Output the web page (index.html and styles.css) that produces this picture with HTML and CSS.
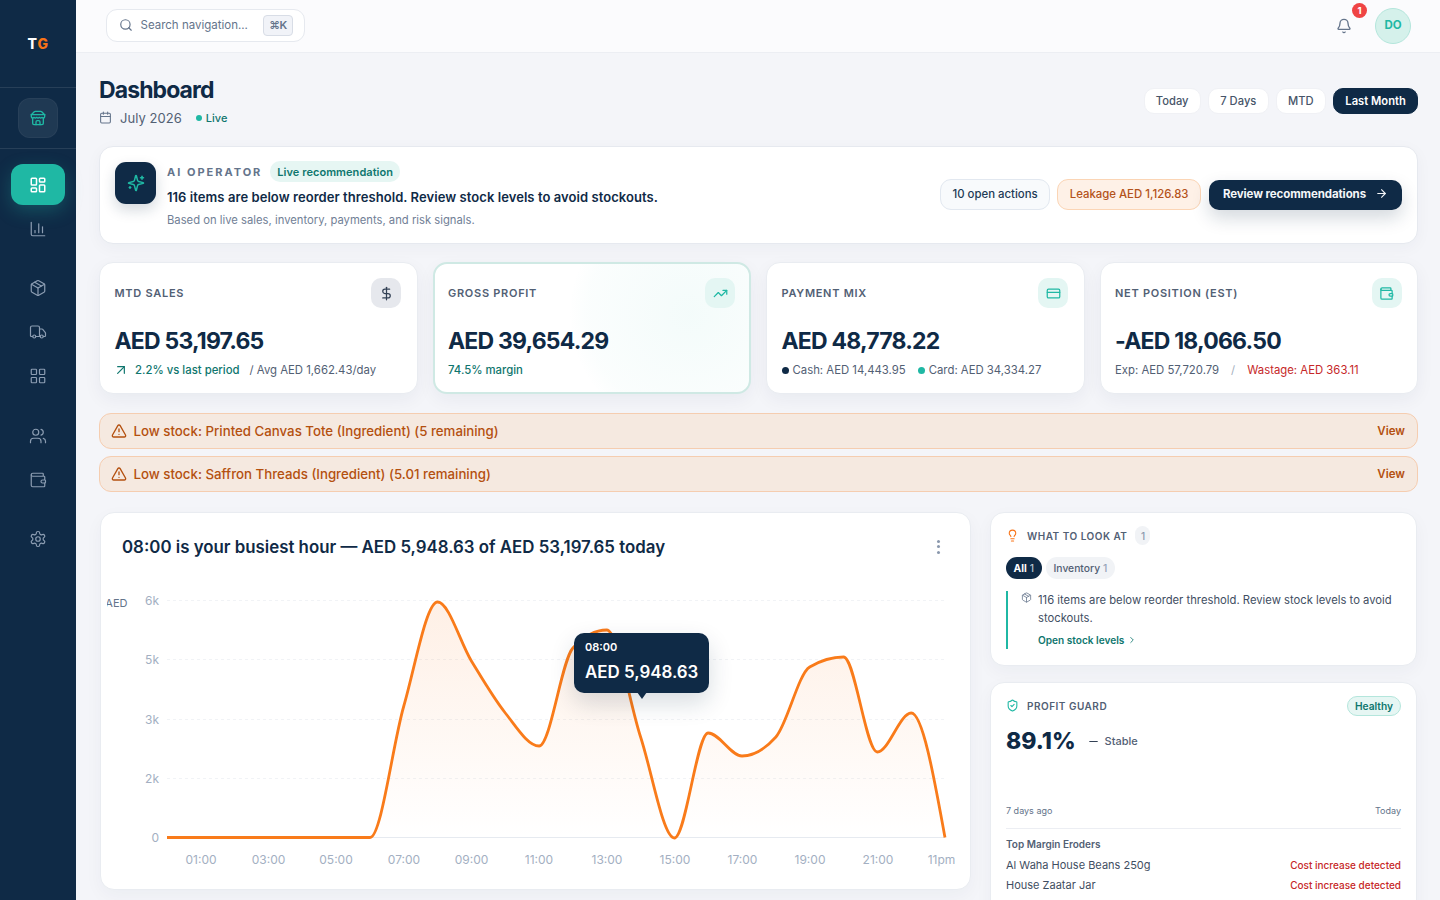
FILE: index.html
```html
<!DOCTYPE html>
<html lang="en">
<head>
<meta charset="utf-8">
<title>Dashboard</title>
<link rel="stylesheet" href="styles.css">
</head>
<body>
<svg class="sprite" aria-hidden="true">
  <symbol id="i-store" viewBox="0 0 24 24"><path d="m2 7 4.41-4.41A2 2 0 0 1 7.83 2h8.34a2 2 0 0 1 1.42.59L22 7"/><path d="M4 12v8a2 2 0 0 0 2 2h12a2 2 0 0 0 2-2v-8"/><path d="M15 22v-4a2 2 0 0 0-2-2h-2a2 2 0 0 0-2 2v4"/><path d="M2 7h20"/><path d="M22 7v3a2 2 0 0 1-2 2a2.7 2.7 0 0 1-1.59-.63.7.7 0 0 0-.82 0A2.7 2.7 0 0 1 16 12a2.7 2.7 0 0 1-1.59-.63.7.7 0 0 0-.82 0A2.7 2.7 0 0 1 12 12a2.7 2.7 0 0 1-1.59-.63.7.7 0 0 0-.82 0A2.7 2.7 0 0 1 8 12a2.7 2.7 0 0 1-1.59-.63.7.7 0 0 0-.82 0A2.7 2.7 0 0 1 4 12a2 2 0 0 1-2-2V7"/></symbol>
  <symbol id="i-dash" viewBox="0 0 24 24"><rect x="3" y="3" width="7" height="9" rx="1"/><rect x="14" y="3" width="7" height="5" rx="1"/><rect x="14" y="12" width="7" height="9" rx="1"/><rect x="3" y="16" width="7" height="5" rx="1"/></symbol>
  <symbol id="i-chart" viewBox="0 0 24 24"><path d="M3 3v16a2 2 0 0 0 2 2h16"/><path d="M18 17V9"/><path d="M13 17V5"/><path d="M8 17v-3"/></symbol>
  <symbol id="i-package" viewBox="0 0 24 24"><path d="M11 21.73a2 2 0 0 0 2 0l7-4A2 2 0 0 0 21 16V8a2 2 0 0 0-1-1.73l-7-4a2 2 0 0 0-2 0l-7 4A2 2 0 0 0 3 8v8a2 2 0 0 0 1 1.73z"/><path d="M12 22V12"/><path d="m3.3 7 8.7 5 8.7-5"/><path d="m7.5 4.27 9 5.15"/></symbol>
  <symbol id="i-truck" viewBox="0 0 24 24"><path d="M14 18V6a2 2 0 0 0-2-2H4a2 2 0 0 0-2 2v11a1 1 0 0 0 1 1h2"/><path d="M15 18H9"/><path d="M19 18h2a1 1 0 0 0 1-1v-3.65a1 1 0 0 0-.22-.624l-3.48-4.35A1 1 0 0 0 17.52 8H14"/><circle cx="17" cy="18" r="2"/><circle cx="7" cy="18" r="2"/></symbol>
  <symbol id="i-grid" viewBox="0 0 24 24"><rect x="3" y="3" width="7" height="7" rx="1"/><rect x="14" y="3" width="7" height="7" rx="1"/><rect x="14" y="14" width="7" height="7" rx="1"/><rect x="3" y="14" width="7" height="7" rx="1"/></symbol>
  <symbol id="i-users" viewBox="0 0 24 24"><path d="M16 21v-2a4 4 0 0 0-4-4H6a4 4 0 0 0-4 4v2"/><circle cx="9" cy="7" r="4"/><path d="M22 21v-2a4 4 0 0 0-3-3.87"/><path d="M16 3.13a4 4 0 0 1 0 7.75"/></symbol>
  <symbol id="i-wallet" viewBox="0 0 24 24"><path d="M19 7V4a1 1 0 0 0-1-1H5a2 2 0 0 0 0 4h15a1 1 0 0 1 1 1v4h-3a2 2 0 0 0 0 4h3a1 1 0 0 0 1-1v-2a1 1 0 0 0-1-1"/><path d="M3 5v14a2 2 0 0 0 2 2h15a1 1 0 0 0 1-1v-4"/></symbol>
  <symbol id="i-settings" viewBox="0 0 24 24"><path d="M12.22 2h-.44a2 2 0 0 0-2 2v.18a2 2 0 0 1-1 1.73l-.43.25a2 2 0 0 1-2 0l-.15-.08a2 2 0 0 0-2.73.73l-.22.38a2 2 0 0 0 .73 2.73l.15.1a2 2 0 0 1 1 1.72v.51a2 2 0 0 1-1 1.74l-.15.09a2 2 0 0 0-.73 2.73l.22.38a2 2 0 0 0 2.73.73l.15-.08a2 2 0 0 1 2 0l.43.25a2 2 0 0 1 1 1.73V20a2 2 0 0 0 2 2h.44a2 2 0 0 0 2-2v-.18a2 2 0 0 1 1-1.73l.43-.25a2 2 0 0 1 2 0l.15.08a2 2 0 0 0 2.73-.73l.22-.39a2 2 0 0 0-.73-2.73l-.15-.08a2 2 0 0 1-1-1.74v-.5a2 2 0 0 1 1-1.74l.15-.09a2 2 0 0 0 .73-2.73l-.22-.38a2 2 0 0 0-2.73-.73l-.15.08a2 2 0 0 1-2 0l-.43-.25a2 2 0 0 1-1-1.73V4a2 2 0 0 0-2-2z"/><circle cx="12" cy="12" r="3"/></symbol>
  <symbol id="i-search" viewBox="0 0 24 24"><circle cx="11" cy="11" r="8"/><path d="m21 21-4.3-4.3"/></symbol>
  <symbol id="i-bell" viewBox="0 0 24 24"><path d="M10.268 21a2 2 0 0 0 3.464 0"/><path d="M3.262 15.326A1 1 0 0 0 4 17h16a1 1 0 0 0 .74-1.673C19.41 13.956 18 12.499 18 8A6 6 0 0 0 6 8c0 4.499-1.411 5.956-2.738 7.326"/></symbol>
  <symbol id="i-cal" viewBox="0 0 24 24"><path d="M8 2v4"/><path d="M16 2v4"/><rect x="3" y="4" width="18" height="18" rx="2"/><path d="M3 10h18"/></symbol>
  <symbol id="i-spark" viewBox="0 0 24 24"><path d="M9.937 15.5A2 2 0 0 0 8.5 14.063l-6.135-1.582a.5.5 0 0 1 0-.962L8.5 9.936A2 2 0 0 0 9.937 8.5l1.582-6.135a.5.5 0 0 1 .963 0L14.063 8.5A2 2 0 0 0 15.5 9.937l6.135 1.581a.5.5 0 0 1 0 .964L15.5 14.063a2 2 0 0 0-1.437 1.437l-1.582 6.135a.5.5 0 0 1-.963 0z"/><path d="M20 3v4"/><path d="M22 5h-4"/><path d="M4 17v2"/><path d="M5 18H3"/></symbol>
  <symbol id="i-arrow" viewBox="0 0 24 24"><path d="M5 12h14"/><path d="m12 5 7 7-7 7"/></symbol>
  <symbol id="i-dollar" viewBox="0 0 24 24"><path d="M12 2v20"/><path d="M17 5H9.5a3.5 3.5 0 0 0 0 7h5a3.5 3.5 0 0 1 0 7H6"/></symbol>
  <symbol id="i-trend" viewBox="0 0 24 24"><path d="M16 7h6v6"/><path d="m22 7-8.5 8.5-5-5L2 17"/></symbol>
  <symbol id="i-upright" viewBox="0 0 24 24"><path d="M7 7h10v10"/><path d="M7 17 17 7"/></symbol>
  <symbol id="i-card" viewBox="0 0 24 24"><rect x="2" y="5" width="20" height="14" rx="2"/><path d="M2 10h20"/></symbol>
  <symbol id="i-alert" viewBox="0 0 24 24"><path d="m21.73 18-8-14a2 2 0 0 0-3.48 0l-8 14A2 2 0 0 0 4 21h16a2 2 0 0 0 1.73-3"/><path d="M12 9v4"/><path d="M12 17h.01"/></symbol>
  <symbol id="i-bulb" viewBox="0 0 24 24"><path d="M15 14c.2-1 .7-1.7 1.5-2.5 1-.9 1.5-2.2 1.5-3.5A6 6 0 0 0 6 8c0 1 .2 2.2 1.5 3.5.7.7 1.3 1.5 1.5 2.5"/><path d="M9 18h6"/><path d="M10 22h4"/></symbol>
  <symbol id="i-shield" viewBox="0 0 24 24"><path d="M20 13c0 5-3.5 7.5-7.66 8.95a1 1 0 0 1-.67-.01C7.5 20.5 4 18 4 13V6a1 1 0 0 1 1-1c2 0 4.5-1.2 6.24-2.72a1.17 1.17 0 0 1 1.52 0C14.51 3.81 17 5 19 5a1 1 0 0 1 1 1z"/><path d="m9 12 2 2 4-4"/></symbol>
  <symbol id="i-chev" viewBox="0 0 24 24"><path d="m9 18 6-6-6-6"/></symbol>
  <symbol id="i-minus" viewBox="0 0 24 24"><path d="M5 12h14"/></symbol>
</svg>

<div class="app">
  <aside class="sidebar">
    <div class="logo"><span class="logo-t">T</span><span class="logo-g">G</span></div>
    <div class="store-wrap">
      <div class="store"><svg class="ic ic-16 teal"><use href="#i-store"/></svg></div>
    </div>
    <nav class="nav">
      <div class="nav-group">
        <a class="nav-item active"><svg class="ic ic-18"><use href="#i-dash"/></svg></a>
        <a class="nav-item"><svg class="ic ic-18"><use href="#i-chart"/></svg></a>
      </div>
      <div class="nav-group">
        <a class="nav-item"><svg class="ic ic-18"><use href="#i-package"/></svg></a>
        <a class="nav-item"><svg class="ic ic-18"><use href="#i-truck"/></svg></a>
        <a class="nav-item"><svg class="ic ic-18"><use href="#i-grid"/></svg></a>
      </div>
      <div class="nav-group">
        <a class="nav-item"><svg class="ic ic-18"><use href="#i-users"/></svg></a>
        <a class="nav-item"><svg class="ic ic-18"><use href="#i-wallet"/></svg></a>
      </div>
      <div class="nav-group">
        <a class="nav-item"><svg class="ic ic-18"><use href="#i-settings"/></svg></a>
      </div>
    </nav>
  </aside>

  <div class="main">
    <header class="topbar">
      <div class="search">
        <svg class="ic ic-14 slate"><use href="#i-search"/></svg>
        <span class="search-text">Search navigation...</span>
        <kbd class="kbd">⌘K</kbd>
      </div>
      <div class="top-right">
        <div class="bell">
          <svg class="ic ic-16 slate"><use href="#i-bell"/></svg>
          <span class="badge">1</span>
        </div>
        <div class="avatar">DO</div>
      </div>
    </header>

    <main class="content">
      <section class="page-head">
        <div>
          <h1 class="page-title">Dashboard</h1>
          <div class="page-sub">
            <svg class="ic ic-13 slate"><use href="#i-cal"/></svg>
            <span class="page-month">July 2026</span>
            <span class="live"><i class="live-dot"></i>Live</span>
          </div>
        </div>
        <div class="ranges">
          <span class="range">Today</span>
          <span class="range">7 Days</span>
          <span class="range">MTD</span>
          <span class="range range-on">Last Month</span>
        </div>
      </section>

      <section class="ai-card">
        <div class="ai-icon"><svg class="ic ic-18 teal"><use href="#i-spark"/></svg></div>
        <div class="ai-body">
          <div class="ai-top">
            <span class="ai-label">AI OPERATOR</span>
            <span class="ai-chip">Live recommendation</span>
          </div>
          <div class="ai-title">116 items are below reorder threshold. Review stock levels to avoid stockouts.</div>
          <div class="ai-note">Based on live sales, inventory, payments, and risk signals.</div>
        </div>
        <div class="ai-actions">
          <span class="tag">10 open actions</span>
          <span class="tag tag-warn">Leakage AED 1,126.83</span>
          <span class="cta">Review recommendations <svg class="ic ic-13"><use href="#i-arrow"/></svg></span>
        </div>
      </section>

      <section class="kpis">
        <article class="kpi">
          <div class="kpi-top"><span class="kpi-label">MTD SALES</span><span class="kpi-ic kpi-ic-grey"><svg class="ic ic-15 navy"><use href="#i-dollar"/></svg></span></div>
          <div class="kpi-value">AED 53,197.65</div>
          <div class="kpi-sub"><svg class="ic up green"><use href="#i-upright"/></svg><span class="green-text">2.2% vs last period</span><span>/ Avg AED 1,662.43/day</span></div>
        </article>
        <article class="kpi kpi-hl">
          <div class="kpi-top"><span class="kpi-label">GROSS PROFIT</span><span class="kpi-ic"><svg class="ic ic-15 teal"><use href="#i-trend"/></svg></span></div>
          <div class="kpi-value">AED 39,654.29</div>
          <div class="kpi-sub"><span class="green-text">74.5% margin</span></div>
        </article>
        <article class="kpi">
          <div class="kpi-top"><span class="kpi-label">PAYMENT MIX</span><span class="kpi-ic"><svg class="ic ic-15 teal"><use href="#i-card"/></svg></span></div>
          <div class="kpi-value">AED 48,778.22</div>
          <div class="kpi-sub"><span class="mix"><i class="mix-dot"></i>Cash: AED 14,443.95</span><span class="mix"><i class="mix-dot mix-dot-teal"></i>Card: AED 34,334.27</span></div>
        </article>
        <article class="kpi">
          <div class="kpi-top"><span class="kpi-label">NET POSITION (EST)</span><span class="kpi-ic"><svg class="ic ic-15 teal"><use href="#i-wallet"/></svg></span></div>
          <div class="kpi-value">-AED 18,066.50</div>
          <div class="kpi-sub"><span>Exp: AED 57,720.79</span><span class="sep">/</span><span class="red-text">Wastage: AED 363.11</span></div>
        </article>
      </section>

      <section class="alerts">
        <div class="alert"><svg class="ic ic-16"><use href="#i-alert"/></svg><span class="alert-text">Low stock: Printed Canvas Tote (Ingredient) (5 remaining)</span><span class="alert-view">View</span></div>
        <div class="alert"><svg class="ic ic-16"><use href="#i-alert"/></svg><span class="alert-text">Low stock: Saffron Threads (Ingredient) (5.01 remaining)</span><span class="alert-view">View</span></div>
      </section>

      <section class="lower">
        <article class="chart-card">
          <div class="chart-head">
            <h2 class="chart-title">08:00 is your busiest hour — AED 5,948.63 of AED 53,197.65 today</h2>
            <span class="dots"><i></i><i></i><i></i></span>
          </div>
          <div class="chart-wrap">
            <svg class="chart" viewBox="107 590 864 300" width="864" height="300">
              <defs>
                <linearGradient id="fillOrange" x1="0" y1="0" x2="0" y2="1">
                  <stop offset="0" stop-color="#f97316" stop-opacity=".11"/>
                  <stop offset="1" stop-color="#f97316" stop-opacity="0"/>
                </linearGradient>
              </defs>
              <g class="gridlines">
                <path d="M167 600.5H945"/><path d="M167 659.5H945"/><path d="M167 719.5H945"/><path d="M167 778.5H945"/>
              </g>
              <path class="axis" d="M167 837.5H945"/>
              <g class="y-labels">
                <text x="159" y="605">6k</text><text x="159" y="664">5k</text><text x="159" y="724">3k</text><text x="159" y="783">2k</text><text x="159" y="842">0</text>
              </g>
              <text class="aed" x="127.5" y="607">AED</text>
              <g class="x-labels">
                <text x="201" y="864">01:00</text><text x="268.5" y="864">03:00</text><text x="336" y="864">05:00</text><text x="404" y="864">07:00</text><text x="471.5" y="864">09:00</text><text x="539" y="864">11:00</text><text x="607" y="864">13:00</text><text x="675" y="864">15:00</text><text x="742.5" y="864">17:00</text><text x="810" y="864">19:00</text><text x="878" y="864">21:00</text><text x="941.5" y="864">11pm</text>
              </g>
              <path class="area" d="M167 837.5L370 837.5C381.3 837.5 392.5 745.25 403.8 706C415.1 666.75 426.3 602 437.6 602C448.9 602 460.1 642.5 471.4 661C482.7 679.5 494 698.8 505.3 713C516.6 727.2 527.8 746 539.1 746C550.4 746 561.6 660 572.9 648C584.2 636 595.4 630 606.7 630C618 630 629.3 702.3 640.6 737C651.9 771.7 663.1 838 674.4 838C685.7 838 696.9 733 708.2 733C719.5 733 730.7 756 742 756C753.3 756 764.6 749.7 775.9 737C787.2 724.3 798.4 673.7 809.7 667C821 660.3 832.3 657 843.6 657C854.9 657 866 752 877.3 752C888.6 752 899.9 713 911.2 713C922.5 713 933.7 775.25 945 837.5Z"/>
              <path class="line" d="M167 837.5L370 837.5C381.3 837.5 392.5 745.25 403.8 706C415.1 666.75 426.3 602 437.6 602C448.9 602 460.1 642.5 471.4 661C482.7 679.5 494 698.8 505.3 713C516.6 727.2 527.8 746 539.1 746C550.4 746 561.6 660 572.9 648C584.2 636 595.4 630 606.7 630C618 630 629.3 702.3 640.6 737C651.9 771.7 663.1 838 674.4 838C685.7 838 696.9 733 708.2 733C719.5 733 730.7 756 742 756C753.3 756 764.6 749.7 775.9 737C787.2 724.3 798.4 673.7 809.7 667C821 660.3 832.3 657 843.6 657C854.9 657 866 752 877.3 752C888.6 752 899.9 713 911.2 713C922.5 713 933.7 775.25 945 837.5"/>
            </svg>
            <div class="tooltip">
              <div class="tooltip-time">08:00</div>
              <div class="tooltip-value">AED 5,948.63</div>
            </div>
          </div>
        </article>

        <div class="side">
          <article class="look">
            <div class="side-head">
              <svg class="ic ic-13 orange"><use href="#i-bulb"/></svg>
              <span class="side-title">WHAT TO LOOK AT</span>
              <span class="count">1</span>
            </div>
            <div class="filters">
              <span class="filter filter-on">All <b>1</b></span>
              <span class="filter">Inventory <b>1</b></span>
            </div>
            <div class="look-item">
              <svg class="ic ic-11 slate look-ic"><use href="#i-package"/></svg>
              <div>
                <p class="look-text">116 items are below reorder threshold. Review stock levels to avoid stockouts.</p>
                <span class="look-link">Open stock levels <svg class="ic ic-10"><use href="#i-chev"/></svg></span>
              </div>
            </div>
          </article>

          <article class="guard">
            <div class="guard-head">
              <svg class="ic ic-13 teal"><use href="#i-shield"/></svg>
              <span class="side-title">PROFIT GUARD</span>
              <span class="healthy">Healthy</span>
            </div>
            <div class="guard-row">
              <span class="guard-value">89.1%</span>
              <svg class="ic ic-13 navy"><use href="#i-minus"/></svg>
              <span class="guard-state">Stable</span>
            </div>
            <div class="guard-range"><span>7 days ago</span><span>Today</span></div>
            <div class="guard-sub">Top Margin Eroders</div>
            <div class="guard-line"><span>Al Waha House Beans 250g</span><span class="guard-flag">Cost increase detected</span></div>
            <div class="guard-line"><span>House Zaatar Jar</span><span class="guard-flag">Cost increase detected</span></div>
          </article>
        </div>
      </section>
    </main>
  </div>
</div>
</body>
</html>
```
FILE: styles.css
```css
* { box-sizing: border-box; }
html, body { margin: 0; height: 100%; overflow: hidden; }
body { font-family: Inter, "Noto Sans", sans-serif; color: #0f2a46; background: #f4f5f9; }
h1, h2, p { margin: 0; }
.sprite { position: absolute; width: 0; height: 0; overflow: hidden; }

.ic { display: block; flex: none; fill: none; stroke: currentColor; stroke-width: 2; stroke-linecap: round; stroke-linejoin: round; }
.ic-10 { width: 10px; height: 10px; }
.ic-11 { width: 11px; height: 11px; }
.ic-13 { width: 13px; height: 13px; }
.ic-14 { width: 14px; height: 14px; }
.ic-15 { width: 15px; height: 15px; }
.ic-16 { width: 16px; height: 16px; }
.ic-18 { width: 18px; height: 18px; }
.teal { color: #1fb8a4; }
.slate { color: #64748b; }
.navy { color: #334155; }
.green { color: #0f766e; }
.orange { color: #f97316; }

.app { display: flex; height: 900px; }

.sidebar { width: 76px; flex: none; background: #0f2a46; }
.logo { height: 88px; display: flex; align-items: center; justify-content: center; padding-bottom: 1px; border-bottom: 1px solid rgba(255,255,255,.1); font-size: 14px; font-weight: 800; letter-spacing: .6px; }
.logo-t { color: #fff; }
.logo-g { color: #f97316; }
.store-wrap { padding: 10px 0; display: flex; justify-content: center; border-bottom: 1px solid rgba(255,255,255,.1); height: 61px; }
.store { width: 40px; height: 40px; border-radius: 12px; background: rgba(255,255,255,.07); border: 1px solid rgba(255,255,255,.04); display: flex; align-items: center; justify-content: center; }
.nav { padding: 15px 11px 0; display: flex; flex-direction: column; gap: 18.5px; }
.nav-group { display: flex; flex-direction: column; gap: 3px; }
.nav-item { height: 41px; border-radius: 12px; display: flex; align-items: center; justify-content: center; color: #8c9db2; }
.nav-item .ic { stroke-width: 1.6; }
.nav-item.active { background: #1fb8a4; color: #fff; box-shadow: 0 6px 18px rgba(31,184,164,.28); }
.nav-item.active .ic { stroke-width: 2; }

.main { flex: 1; min-width: 0; display: flex; flex-direction: column; }
.topbar { height: 53px; flex: none; background: #fbfbfd; border-bottom: 1px solid #eceef3; display: flex; align-items: center; justify-content: space-between; padding: 0 29px 1px 30px; }
.search { width: 199px; height: 33px; background: #fff; border: 1px solid #e6e9ef; border-radius: 11px; display: flex; align-items: center; padding: 0 11px 1px 11.5px; gap: 8px; }
.search-text { flex: 1; font-size: 11.5px; color: #64748b; white-space: nowrap; }
.kbd { font-family: Inter, "DejaVu Sans", sans-serif; font-size: 11px; font-weight: 600; letter-spacing: -.4px; color: #64748b; width: 30px; height: 21px; display: flex; align-items: center; justify-content: center; background: #f1f3f8; border: 1px solid #d8dde6; border-radius: 4px; }
.top-right { display: flex; align-items: center; gap: 23px; }
.bell { position: relative; width: 16px; height: 16px; }
.badge { position: absolute; top: -15px; left: 16px; width: 15px; height: 15px; border-radius: 50%; background: #ef4444; color: #fff; font-size: 9.5px; font-weight: 700; display: flex; align-items: center; justify-content: center; }
.avatar { width: 36px; height: 36px; border-radius: 50%; padding-bottom: 1px; background: #d5f1eb; border: 1px solid #b4e6dc; color: #1fb8a4; font-size: 11.5px; font-weight: 700; display: flex; align-items: center; justify-content: center; }

.content { flex: 1; min-height: 0; overflow: hidden; padding: 25px 22px 0 23px; }
.page-head { display: flex; justify-content: space-between; height: 68px; }
.page-title { font-size: 23px; line-height: 25px; font-weight: 700; letter-spacing: -.9px; color: #0f2a46; }
.page-sub { display: flex; align-items: center; margin-top: 6px; height: 17px; }
.page-month { margin-left: 8px; font-size: 13px; color: #526074; letter-spacing: .05px; }
.live { margin-left: 14px; display: flex; align-items: center; gap: 4px; font-size: 11px; font-weight: 500; color: #0f766e; }
.live-dot { width: 6px; height: 6px; border-radius: 50%; background: #1fb8a4; }
.ranges { display: flex; gap: 7.33px; margin-top: 10px; align-items: flex-start; }
.range { height: 26px; padding: 0 11.2px; border-radius: 10px; background: #fff; border: 1px solid #f0f1f5; font-size: 11.2px; font-weight: 500; color: #475569; display: flex; align-items: center; white-space: nowrap; }
.range-on { background: #0f2a46; color: #fff; font-weight: 600; border-color: #0f2a46; }

.ai-card { height: 98px; background: #fff; border: 1px solid #e6e9ef; border-radius: 14px; display: flex; align-items: flex-start; padding: 15px 15px 0; box-shadow: 0 4px 16px rgba(15,42,70,.04); }
.ai-icon { width: 41px; height: 42px; border-radius: 11px; background: #0f2a46; display: flex; align-items: center; justify-content: center; box-shadow: 0 6px 14px rgba(15,42,70,.18); }
.ai-body { flex: 1; margin-left: 11px; }
.ai-top { display: flex; align-items: center; gap: 8px; height: 21px; margin-top: -1px; }
.ai-label { font-size: 11px; font-weight: 700; letter-spacing: 2px; color: #64748b; }
.ai-chip { height: 21px; padding: 0 7px; border-radius: 10px; background: #e6f6f3; color: #0f766e; font-size: 11px; font-weight: 600; letter-spacing: .05px; display: flex; align-items: center; }
.ai-title { margin-top: 5px; font-size: 13px; line-height: 20px; font-weight: 600; letter-spacing: .065px; color: #0f2a46; }
.ai-note { margin-top: 6px; font-size: 11.25px; line-height: 15px; color: #718096; }
.ai-actions { display: flex; align-items: center; gap: 7px; margin-top: 17px; }
.tag { height: 31px; padding: 0 11.5px 2px; border-radius: 11px; background: #f8fafc; border: 1px solid #e2e8f0; font-size: 11.4px; font-weight: 500; color: #1e3a56; display: flex; align-items: center; white-space: nowrap; }
.tag-warn { background: #fef1e7; border-color: #fbd5b5; color: #b4531a; }
.cta { height: 30px; margin-left: 1px; padding: 0 14px 2px; border-radius: 10px; background: #0f2a46; color: #f4f6f9; font-size: 11.5px; font-weight: 700; display: flex; align-items: center; gap: 9px; white-space: nowrap; box-shadow: 0 8px 18px rgba(15,42,70,.18); letter-spacing: -.1px; }

.kpis { display: grid; grid-template-columns: repeat(4, minmax(0, 1fr)); gap: 15px; margin-top: 18px; }
.kpi { position: relative; overflow: hidden; height: 132px; background: #fff; border: 1px solid #e9ecf1; border-radius: 14px; padding: 15px 15.5px 0 14.5px; box-shadow: 0 6px 18px rgba(15,42,70,.05); }
.kpi-hl { border: 2px solid #cfe9e4; padding: 14px 14px 0 13.5px; }
.kpi-hl::before { content: ""; position: absolute; top: -70px; right: -60px; width: 240px; height: 240px; border-radius: 50%; background: radial-gradient(circle, rgba(31,184,164,.05), rgba(31,184,164,.02) 60%, rgba(31,184,164,0) 71%); }
.kpi-top { position: relative; display: flex; align-items: center; justify-content: space-between; height: 30px; }
.kpi-label { font-size: 11px; font-weight: 600; letter-spacing: .72px; color: #526074; }
.kpi-ic { width: 30px; height: 30px; border-radius: 10px; background: #e4f6f3; display: flex; align-items: center; justify-content: center; }
.kpi-ic-grey { background: #e6e8ed; }
.kpi-value { position: relative; margin-top: 18px; font-size: 23px; line-height: 30px; font-weight: 700; letter-spacing: -.8px; color: #0f2a46; white-space: nowrap; }
.kpi-sub { position: relative; margin-top: 6px; display: flex; align-items: center; height: 16px; font-size: 11.35px; color: #526074; white-space: nowrap; }
.up { width: 16px; height: 16px; margin: 0 6px 0 -1.5px; stroke-width: 1.8; }
.green-text { color: #0f766e; font-weight: 500; margin-right: 10px; }
.red-text { color: #c62828; }
.sep { margin: 0 12px; color: #a4afbd; }
.mix { display: flex; align-items: center; gap: 4px; margin-right: 12px; }
.mix-dot { width: 7px; height: 7px; border-radius: 50%; background: #0f2a46; }
.mix-dot-teal { background: #1fb8a4; }

.alerts { margin-top: 19px; display: flex; flex-direction: column; gap: 7px; }
.alert { height: 36px; display: flex; align-items: center; padding: 0 12px 0 10.5px; gap: 7px; background: #f5e9e0; border: 1px solid #f5cdb0; border-radius: 12px; color: #b4500f; }
.alert-text { flex: 1; font-size: 13.27px; font-weight: 500; }
.alert-view { font-size: 11.5px; font-weight: 600; margin-top: -1px; }

.lower { margin-top: 20px; display: grid; grid-template-columns: minmax(0, 1fr) 428px; gap: 19px; align-items: start; }
.chart-card { height: 378px; margin-left: 1px; background: #fff; border: 1px solid #e9ecf1; border-radius: 14px; box-shadow: 0 6px 18px rgba(15,42,70,.04); overflow: hidden; }
.chart-head { height: 77px; display: flex; justify-content: space-between; align-items: center; padding: 0 30.5px 10px 21px; }
.chart-title { font-size: 16.85px; font-weight: 600; color: #0f2a46; white-space: nowrap; }
.dots { display: flex; flex-direction: column; gap: 2.5px; }
.dots i { width: 3px; height: 3px; border-radius: 50%; background: #8a98ad; }
.chart-wrap { position: relative; margin-left: 6px; height: 300px; }
.chart { display: block; }
.gridlines path { stroke: #f1f3f6; stroke-dasharray: 3 3; fill: none; }
.axis { stroke: #e6eaf0; fill: none; }
.y-labels text { font-size: 12px; fill: #a3afc2; text-anchor: end; }
.x-labels text { font-size: 12px; fill: #a3afc2; text-anchor: middle; }
.aed { font-size: 11px; fill: #64748b; text-anchor: end; }
.area { fill: url(#fillOrange); }
.line { fill: none; stroke: #f97b1a; stroke-width: 2.8; stroke-linejoin: round; stroke-linecap: butt; }
.tooltip { position: absolute; left: 467px; top: 43px; width: 135px; height: 60px; border-radius: 10px; background: #0f2a46; color: #fff; padding: 7px 11px; box-shadow: 0 10px 24px rgba(15,42,70,.16); }
.tooltip::after { content: ""; position: absolute; left: 63px; bottom: -6px; border: 5px solid transparent; border-bottom: 0; border-top: 7px solid #0f2a46; }
.tooltip-time { font-size: 11px; line-height: 14px; font-weight: 600; }
.tooltip-value { margin-top: 6px; font-size: 16.9px; line-height: 24px; font-weight: 600; white-space: nowrap; }

.side { display: flex; flex-direction: column; gap: 16px; }
.look, .guard { background: #fff; border: 1px solid #e9ecf1; border-radius: 14px; box-shadow: 0 6px 18px rgba(15,42,70,.04); padding: 13px 15px 0; width: 427px; }
.look { height: 154px; }
.guard { height: 260px; }
.side-head, .guard-head { display: flex; align-items: center; height: 19px; }
.side-title { margin-left: 8px; font-size: 10px; font-weight: 600; letter-spacing: .5px; color: #526074; }
.count { margin-left: 8px; width: 15px; height: 19px; border-radius: 8px; background: #f1f3f6; color: #8a98ad; font-size: 10px; font-weight: 500; display: flex; align-items: center; justify-content: center; }
.filters { display: flex; gap: 4px; margin-top: 12px; }
.filter { height: 22px; padding: 0 8px; border-radius: 11px; background: #f1f3f6; color: #526074; font-size: 10.3px; font-weight: 500; display: flex; align-items: center; gap: 3px; }
.filter b { font-weight: 500; color: #94a3b8; }
.filter-on { padding: 0 7.5px; background: #0f2a46; color: #fff; font-weight: 700; }
.filter-on b { color: #b7c2d0; }
.look-item { margin-top: 12px; height: 58px; border-left: 2px solid #1fb8a4; padding-left: 13px; display: flex; gap: 6px; }
.look-ic { margin-top: 1px; stroke-width: 1.7; }
.look-text { font-size: 11.25px; line-height: 18px; color: #3f4e62; }
.look-link { display: flex; align-items: center; gap: 3px; margin-top: 6px; font-size: 10.1px; line-height: 14px; font-weight: 600; color: #0f766e; }
.guard-head .side-title { flex: 1; }
.healthy { height: 20px; padding: 0 7px; border-radius: 10px; background: #e6f6f3; border: 1px solid #b4e6dc; color: #0f766e; font-size: 10.2px; font-weight: 600; display: flex; align-items: center; }
.guard-row { display: flex; align-items: center; margin-top: 11px; height: 30px; }
.guard-value { font-size: 23px; font-weight: 800; color: #0f2a46; }
.guard-row .ic { margin-left: 11px; }
.guard-state { margin-left: 5px; font-size: 11px; font-weight: 500; color: #526074; }
.guard-range { margin-top: 48px; display: flex; justify-content: space-between; font-size: 9px; line-height: 14px; color: #64748b; padding-bottom: 10px; border-bottom: 1px solid #eceef3; }
.guard-sub { margin-top: 8px; margin-bottom: 4px; font-size: 10px; line-height: 14px; font-weight: 600; color: #526074; }
.guard-line { display: flex; justify-content: space-between; align-items: center; height: 20px; font-size: 11px; color: #3f4e62; }
.guard-flag { font-size: 10px; font-weight: 500; color: #c62828; }
```
